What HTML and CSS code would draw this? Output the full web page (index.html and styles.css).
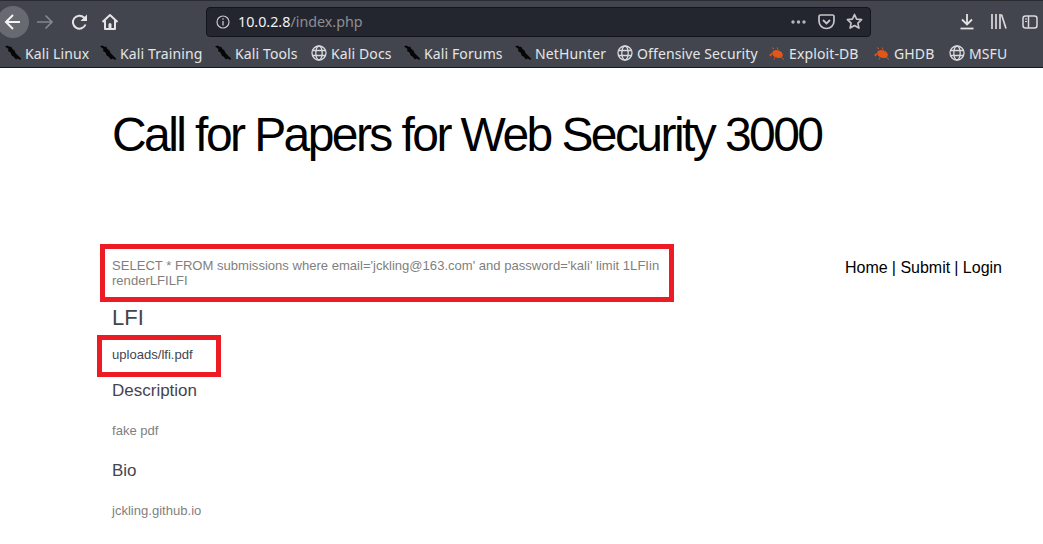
FILE: index.html
```html
<!DOCTYPE html>
<html lang="en">
<head>
<meta charset="utf-8">
<title>Call for Papers</title>
<link rel="stylesheet" href="styles.css">
</head>
<body>
<svg class="defs" width="0" height="0" aria-hidden="true">
  <defs>
    <symbol id="dragon" viewBox="0 0 16 16">
      <path d="M0 1.500 L2.500 0.500 L5 2 L6 1.500 L7.500 4 L9.500 5.500 L10.500 8 L13 10.500 L16 13.500 L15.500 15 L12.500 13.500 L11 14.500 L8.500 11.500 L7 11 L5.500 7.500 L3 6 L3.500 4 Z" fill="#060606"/>
    </symbol>
    <symbol id="globe" viewBox="0 0 16 16">
      <g fill="none" stroke="#d8d9dc" stroke-width="1.300">
        <circle cx="8" cy="8" r="7"/>
        <ellipse cx="8" cy="8" rx="3.200" ry="7"/>
        <path d="M1.200 5.500H14.800M1.200 10.500H14.800"/>
      </g>
    </symbol>
    <symbol id="bug" viewBox="0 0 16 16">
      <ellipse cx="8.500" cy="9" rx="5.500" ry="3.800" transform="rotate(20 8.500 9)" fill="#e2561a"/>
      <path d="M3 9.500L0.500 9.500M5 4L3 2.500M9 4.500L8 2.500M12 12L15 14.500M6 12.500L5 14.500" stroke="#b9603a" stroke-width="1"/>
      <path d="M3 8.500L1 11" stroke="#d9531e" stroke-width="1.600"/>
    </symbol>
  </defs>
</svg>

<header class="chrome">
  <div class="toolbar">
    <div class="back">
      <svg width="18" height="18" viewBox="0 0 18 18"><path d="M16 9H2M9 2L2 9l7 7" fill="none" stroke="#f4f4f5" stroke-width="2"/></svg>
    </div>
    <svg class="tb forward" width="18" height="18" viewBox="0 0 18 18"><path d="M1 9h15M9.500 2.500L16 9l-6.500 6.500" fill="none" stroke="#85878c" stroke-width="1.700"/></svg>
    <svg class="tb reload" width="18" height="18" viewBox="0 0 18 18"><path d="M14.500 11.500A6.500 6.500 0 1 1 13 4.500L15 6.500" fill="none" stroke="#e4e4e6" stroke-width="2"/><path d="M16 1.500V8H9.500Z" fill="#e4e4e6"/></svg>
    <svg class="tb home" width="18" height="18" viewBox="0 0 18 18"><path d="M1.500 9L9 2l7.500 7M4 7.500V16h10V7.500" fill="none" stroke="#e4e4e6" stroke-width="2" stroke-linejoin="round"/><path d="M7.500 16v-4.500a1.500 1.500 0 0 1 3 0V16Z" fill="#e4e4e6"/></svg>
    <div class="urlbar">
      <svg class="info" width="14" height="14" viewBox="0 0 14 14"><circle cx="7" cy="7" r="6" fill="none" stroke="#c5c6c9" stroke-width="1.200"/><path d="M7 6v4.500M7 3.200v1.500" stroke="#c5c6c9" stroke-width="1.300"/></svg>
      <span class="url"><span class="host">10.0.2.8</span>/index.php</span>
      <span class="url-actions">
        <svg width="17" height="6" viewBox="0 0 17 6"><circle cx="3" cy="3" r="1.700" fill="#b6b7ba"/><circle cx="8.500" cy="3" r="1.700" fill="#b6b7ba"/><circle cx="14" cy="3" r="1.700" fill="#b6b7ba"/></svg>
        <svg width="17" height="16" viewBox="0 0 17 16"><path d="M2.500 1h12A1.500 1.500 0 0 1 16 2.500V7A7.500 7.500 0 0 1 1 7V2.500A1.500 1.500 0 0 1 2.500 1Z" fill="none" stroke="#c5c6c9" stroke-width="1.700"/><path d="M5 6l3.500 3.500L12 6" fill="none" stroke="#c5c6c9" stroke-width="1.800"/></svg>
        <svg width="17" height="17" viewBox="0 0 17 17"><path d="M8.500 1.500l2.100 4.600 5 .6-3.700 3.400 1 5-4.400-2.500-4.400 2.500 1-5L1.400 6.700l5-.6Z" fill="none" stroke="#c5c6c9" stroke-width="1.700" stroke-linejoin="round"/></svg>
      </span>
    </div>
    <div class="tools">
      <svg width="16" height="17" viewBox="0 0 16 17"><path d="M8 1v10M3 6.500L8 11.500l5-5" fill="none" stroke="#e4e4e6" stroke-width="1.800"/><path d="M1.500 15.500h13" stroke="#e4e4e6" stroke-width="1.800"/></svg>
      <svg width="17" height="15" viewBox="0 0 17 15"><path d="M2 0v15M6 0v15M10 0v15M11.500 .5L16 14.500" fill="none" stroke="#d8d9dc" stroke-width="1.700"/></svg>
      <svg width="16" height="14" viewBox="0 0 16 14"><rect x="1" y="1" width="14" height="12" rx="2.500" fill="none" stroke="#d8d9dc" stroke-width="1.500"/><path d="M6.500 1v12" stroke="#d8d9dc" stroke-width="1.500"/><path d="M3 4h2M3 6.500h2" stroke="#d8d9dc" stroke-width="1.200"/></svg>
    </div>
  </div>
  <nav class="bookmarks">
    <a class="bm"><svg width="16" height="16"><use href="#dragon"/></svg>Kali Linux</a>
    <a class="bm"><svg width="16" height="16"><use href="#dragon"/></svg>Kali Training</a>
    <a class="bm"><svg width="16" height="16"><use href="#dragon"/></svg>Kali Tools</a>
    <a class="bm"><svg width="16" height="16"><use href="#globe"/></svg>Kali Docs</a>
    <a class="bm"><svg width="16" height="16"><use href="#dragon"/></svg>Kali Forums</a>
    <a class="bm"><svg width="16" height="16"><use href="#dragon"/></svg>NetHunter</a>
    <a class="bm"><svg width="16" height="16"><use href="#globe"/></svg>Offensive Security</a>
    <a class="bm"><svg width="16" height="16"><use href="#bug"/></svg>Exploit-DB</a>
    <a class="bm"><svg width="16" height="16"><use href="#bug"/></svg>GHDB</a>
    <a class="bm"><svg width="16" height="16"><use href="#globe"/></svg>MSFU</a>
  </nav>
</header>

<main class="page">
  <h1 class="title">Call for Papers for Web Security 3000</h1>
  <div class="columns">
    <section class="content">
      <p class="query">SELECT * FROM submissions where email='jckling@163.com' and password='kali' limit 1LFIin renderLFILFI</p>
      <h2 class="paper">LFI</h2>
      <p class="file">uploads/lfi.pdf</p>
      <h3 class="label">Description</h3>
      <p class="text">fake pdf</p>
      <h3 class="label">Bio</h3>
      <p class="text">jckling.github.io</p>
    </section>
    <nav class="menu">
      <a>Home</a><span class="sep">|</span><a>Submit</a><span class="sep">|</span><a>Login</a>
    </nav>
  </div>
  <div class="mark mark-query"></div>
  <div class="mark mark-file"></div>
</main>
</body>
</html>
```
FILE: styles.css
```css
html, body {
  margin: 0;
  padding: 0;
  height: 544px;
  overflow: hidden;
  background: #fff;
}
.defs { position: absolute; }
.chrome {
  height: 68px;
  box-sizing: border-box;
  background: #42454d;
  border-top: 1px solid #2a2b31;
  border-bottom: 1px solid #17181c;
  font-family: "Noto Sans", sans-serif;
  color: #e4e5e7;
}
.toolbar {
  height: 37px;
  display: flex;
  align-items: center;
}
.back {
  width: 32px;
  height: 32px;
  margin: 4px 0 0 -3px;
  border-radius: 50%;
  background: #686a71;
  display: flex;
  align-items: center;
  justify-content: center;
}
.tb { margin-top: 4px; flex: none; }
.forward { margin-left: 7px; }
.reload { margin-left: 17px; }
.home { margin-left: 12px; }
.urlbar {
  width: 665px;
  height: 30px;
  margin: 4px 0 0 87px;
  box-sizing: border-box;
  display: flex;
  align-items: center;
  background: #24262f;
  border: 1px solid #14151a;
  border-radius: 4px;
  padding: 0 7px 0 9px;
}
.url {
  margin-left: 8px;
  font-size: 14.3px;
  color: #8d8e93;
}
.host { color: #f2f2f3; }
.url-actions {
  margin-left: auto;
  display: flex;
  align-items: center;
  gap: 11px;
}
.tools {
  display: flex;
  align-items: center;
  gap: 15px;
  margin: 4px 0 0 88px;
}
.bookmarks {
  display: grid;
  grid-template-columns: 95px 115px 96px 93px 111px 102px 152px 105px 75px auto;
  align-items: center;
  height: 29px;
  padding: 1px 0 0 5px;
  box-sizing: border-box;
}
.bm {
  display: flex;
  align-items: center;
  gap: 4px;
  font-size: 14px;
  letter-spacing: 0.12px;
  white-space: nowrap;
}
.page {
  position: relative;
  font-family: "Liberation Sans", Arial, sans-serif;
  padding: 0 41px 0 112px;
}
.title {
  margin: 0;
  padding-top: 37px;
  font-size: 48px;
  line-height: 60px;
  font-weight: 400;
  letter-spacing: -2.58px;
  color: #000;
}
.columns {
  display: flex;
  justify-content: space-between;
  padding-top: 93px;
}
.content { width: 552px; }
.query {
  margin: 0;
  font-size: 13.07px;
  line-height: 15px;
  color: #7f7f7f;
}
.paper {
  margin: 17px 0 0;
  font-size: 22px;
  line-height: 26px;
  font-weight: 400;
  color: #44444f;
}
.file {
  margin: 16px 0 0;
  font-size: 13.07px;
  line-height: 15px;
  color: #44444f;
}
.label {
  margin: 19px 0 0;
  font-size: 17px;
  line-height: 20px;
  font-weight: 400;
  color: #44444f;
}
.text {
  margin: 22px 0 0;
  font-size: 13.07px;
  line-height: 15px;
  color: #7f7f7f;
}
.text + .label { margin-top: 23px; }
.menu {
  display: flex;
  font-size: 16px;
  line-height: 18px;
  color: #000;
  padding-top: 1px;
}
.sep { margin: 0 4.500px 0 4px; }
.mark {
  position: absolute;
  box-sizing: border-box;
  border: 5px solid #ed1c24;
}
.mark-query { left: 100px; top: 176px; width: 574px; height: 58px; }
.mark-file { left: 97px; top: 267px; width: 124px; height: 42px; }
```
